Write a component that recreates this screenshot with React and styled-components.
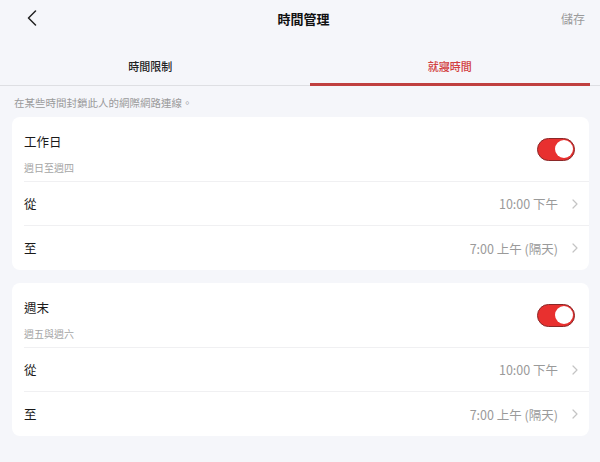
import React from "react";
import styled, { createGlobalStyle } from "styled-components";

const Global = createGlobalStyle`
  html, body { margin: 0; padding: 0; background: #f5f6fa; }
  body { font-family: "Noto Sans CJK TC", "Noto Sans", sans-serif; }
  * { box-sizing: border-box; }
`;

const Page = styled.div`
  width: 600px;
  height: 462px;
  background: #f5f6fa;
  overflow: hidden;
`;

const Header = styled.div`
  height: 36px;
  display: grid;
  grid-template-columns: 80px 1fr 80px;
  align-items: center;
  padding: 0 15px 0 27px;
`;

const BackBtn = styled.div`
  display: flex;
  align-items: center;
  color: #222;
`;

const Title = styled.div`
  text-align: center;
  font-size: 13px;
  font-weight: 700;
  color: #111;
  padding-right: 5px;
`;

const Save = styled.div`
  text-align: right;
  font-size: 12px;
  color: #9a9a9a;
`;

const Tabs = styled.div`
  margin-top: 12px;
  display: flex;
  gap: 19px;
  padding: 0 10px;
  border-bottom: 1px solid #dedfe3;
`;

const Tab = styled.div`
  flex: 1;
  height: 38px;
  display: flex;
  align-items: center;
  justify-content: center;
  font-size: 11px;
  font-weight: 500;
  color: ${(p) => (p.$active ? "#d2403f" : "#222")};
  border-bottom: 3px solid ${(p) => (p.$active ? "#c0403f" : "transparent")};
  margin-bottom: -1px;
`;

const Desc = styled.div`
  padding: 9px 14px 0;
  height: 31px;
  font-size: 10.5px;
  color: #9a9a9a;
`;

const Card = styled.div`
  margin: 0 11px 13px 12px;
  background: #fff;
  border-radius: 8px;
  padding-left: 12px;
`;

const HeadRow = styled.div`
  height: 65px;
  display: flex;
  align-items: center;
  justify-content: space-between;
  padding-right: 14px;
  border-bottom: 1px solid #f0f0f2;
`;

const HeadText = styled.div`
  align-self: flex-start;
  display: flex;
  flex-direction: column;
  gap: 10px;
  padding-top: 16px;
`;

const Label = styled.div`
  font-size: 12.5px;
  color: #1a1a1a;
  line-height: 18px;
`;

const Sub = styled.div`
  font-size: 10px;
  color: #a5a5a5;
  line-height: 14px;
`;

const Toggle = styled.div`
  width: 38px;
  height: 23px;
  border-radius: 12px;
  background: #e8302f;
  border: 1.5px solid #8a2828;
  display: flex;
  align-items: center;
  justify-content: flex-end;
  padding: 1px;
`;

const Knob = styled.div`
  width: 18px;
  height: 18px;
  border-radius: 50%;
  background: #fff;
`;

const Row = styled.div`
  height: 44px;
  display: flex;
  align-items: center;
  justify-content: space-between;
  padding-right: 11px;
  border-bottom: ${(p) => (p.$last ? "none" : "1px solid #f0f0f2")};
`;

const Value = styled.div`
  display: flex;
  align-items: center;
  gap: 14px;
  font-size: 12.5px;
  color: #9a9a9a;
`;

const Chevron = ({ size = 10, color = "#c4c4c4", w = 1.2 }) => (
  <svg width={size * 0.6} height={size} viewBox="0 0 6 10">
    <path d="M1 1 L5 5 L1 9" fill="none" stroke={color} strokeWidth={w} strokeLinecap="round" strokeLinejoin="round" />
  </svg>
);

const BackIcon = () => (
  <svg width="10" height="16" viewBox="0 0 10 16">
    <path d="M8.5 1 L1.5 8 L8.5 15" fill="none" stroke="#222" strokeWidth="1.5" strokeLinecap="round" strokeLinejoin="round" />
  </svg>
);

const ScheduleCard = ({ title, sub, from, to }) => (
  <Card>
    <HeadRow>
      <HeadText>
        <Label>{title}</Label>
        <Sub>{sub}</Sub>
      </HeadText>
      <Toggle>
        <Knob />
      </Toggle>
    </HeadRow>
    <Row>
      <Label>從</Label>
      <Value>
        {from}
        <Chevron />
      </Value>
    </Row>
    <Row $last>
      <Label>至</Label>
      <Value>
        {to}
        <Chevron />
      </Value>
    </Row>
  </Card>
);

export default function App() {
  return (
    <Page>
      <Global />
      <Header>
        <BackBtn>
          <BackIcon />
        </BackBtn>
        <Title>時間管理</Title>
        <Save>儲存</Save>
      </Header>
      <Tabs>
        <Tab>時間限制</Tab>
        <Tab $active>就寢時間</Tab>
      </Tabs>
      <Desc>在某些時間封鎖此人的網際網路連線。</Desc>
      <ScheduleCard title="工作日" sub="週日至週四" from="10:00 下午" to="7:00 上午 (隔天)" />
      <ScheduleCard title="週末" sub="週五與週六" from="10:00 下午" to="7:00 上午 (隔天)" />
    </Page>
  );
}
